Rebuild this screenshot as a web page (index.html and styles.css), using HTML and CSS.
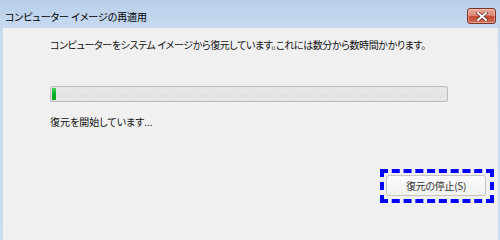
FILE: index.html
```html
<!DOCTYPE html>
<html lang="ja">
<head>
<meta charset="utf-8">
<link rel="stylesheet" href="styles.css">
</head>
<body>
<div class="window">
  <div class="titlebar">
    <span class="title">コンピューター イメージの再適用</span>
    <div class="close">
      <svg width="12" height="9" viewBox="0 0 12 9">
        <path d="M2 1 L10 8 M10 1 L2 8" stroke="#5a2a24" stroke-width="3.4" stroke-linecap="square" fill="none"/>
        <path d="M2 1 L10 8 M10 1 L2 8" stroke="#ffffff" stroke-width="2" stroke-linecap="square" fill="none"/>
      </svg>
    </div>
  </div>
  <div class="content">
    <p class="msg">コンピューターをシステム イメージから復元しています。これには数分から数時間かかります。</p>
    <div class="progress"><div class="fill" style="width:4px"></div></div>
    <p class="status">復元を開始しています...</p>
    <div class="actions">
      <div class="focus"><button class="btn">復元の停止(S)</button></div>
    </div>
  </div>
</div>
</body>
</html>
```
FILE: styles.css
```css
html, body {
  margin: 0;
  padding: 0;
  width: 500px;
  height: 100%;
  overflow: hidden;
  background: linear-gradient(to right, #c9dcf1 3px, #f0f0f0 3px, #f0f0f0 498px, #c9dcf1 498px);
}
.window {
  width: 500px;
  height: 100%;
  min-height: 210px;
  display: flex;
  flex-direction: column;
  background: linear-gradient(#b9cfe9, #c6d9ef 28px, #c9dcf1);
  font-family: "Noto Sans CJK JP", "Noto Sans", sans-serif;
  font-feature-settings: "palt";
}
.titlebar {
  height: 28px;
  flex: none;
  display: flex;
  justify-content: space-between;
  align-items: flex-start;
  box-sizing: border-box;
  padding: 0 4px 0 5px;
}
.title {
  margin-top: 9px;
  font-size: 10px;
  letter-spacing: -0.1px;
  line-height: 16px;
  color: #000;
}
.close {
  margin-top: 8px;
  width: 29px;
  height: 16px;
  box-sizing: border-box;
  border: 1px solid #7b3328;
  border-radius: 3px;
  background: linear-gradient(#eaa99a, #dc8878 45%, #c4452f 55%, #d0705a);
  box-shadow: inset 0 0 0 1px rgba(255,210,200,0.5);
  display: flex;
  align-items: center;
  justify-content: center;
}
.content {
  flex: 1 0 auto;
  margin: 0 2px 0 3px;
  background: #f0f0f0;
  padding: 9px 0 0 47px;
  display: flex;
  flex-direction: column;
  align-items: flex-start;
  color: #111;
}
.msg, .status {
  margin: 0;
  font-size: 10px;
  line-height: 16px;
}
.msg {
  letter-spacing: -0.4px;
}
.progress {
  margin-top: 33px;
  width: 398px;
  height: 16px;
  box-sizing: border-box;
  border: 1px solid #bcbcbc;
  border-radius: 2px;
  background:
    radial-gradient(circle, #d2d2d2 0.5px, transparent 0.9px) 3px 8px / 5px 2px repeat-x,
    #e6e6e6;
  padding: 1px;
  display: flex;
}
.fill {
  height: 100%;
  background: linear-gradient(#3fd04f, #06b025 50%, #0aa020);
}
.status {
  margin-top: 12px;
}
.actions {
  align-self: stretch;
  display: flex;
  justify-content: flex-end;
  margin-top: 39px;
  padding-right: 4px;
}
.focus {
  border: 4px dashed #0000ff;
  padding: 2px 4px 3px 2px;
}
.btn {
  display: block;
  width: 100px;
  height: 21px;
  box-sizing: border-box;
  border: 1px solid #c4c4c4;
  border-radius: 3px;
  background: linear-gradient(#fafafa, #f2f2f2);
  font-family: "Noto Sans CJK JP", "Noto Sans", sans-serif;
  font-feature-settings: "palt";
  font-size: 10px;
  letter-spacing: -0.3px;
  line-height: 17px;
  color: #333;
  padding: 0;
}
```
